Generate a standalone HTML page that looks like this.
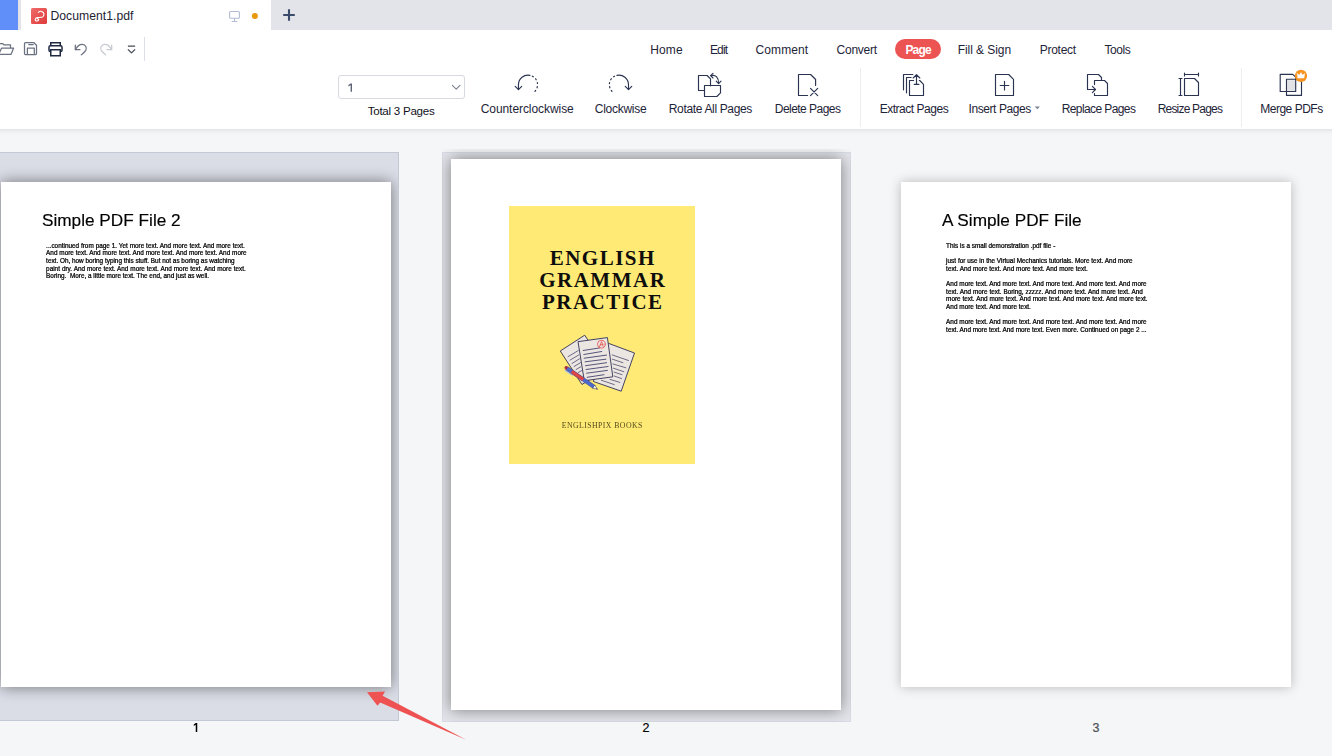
<!DOCTYPE html>
<html><head><meta charset="utf-8"><title>Document1.pdf</title>
<style>
html,body{margin:0;padding:0}
body{width:1332px;height:756px;overflow:hidden;position:relative;background:#f4f6f8;font-family:"Liberation Sans",sans-serif;color:#22283a}
.a{position:absolute}
.t{position:absolute;white-space:nowrap;line-height:1;transform-origin:0 0}
#tabbar{left:0;top:0;width:1332px;height:30px;background:#e2e4e9}
#blue{left:0;top:0;width:18px;height:30px;background:#618ffa}
#tab{left:21px;top:0;width:250px;height:30px;background:#fff}
#row2{left:0;top:30px;width:1332px;height:99px;background:#fff}
#rshadow{left:0;top:129px;width:1332px;height:6px;background:linear-gradient(#e4e5e7,#e8e9eb 20%,#edeef0 37%,#f0f1f3 54%,#f2f3f6 70%,#f3f5f7 85%,#f4f6f8)}
#pill{left:895px;top:39px;width:46px;height:20px;border-radius:10px;background:#ec5353}
#sel{left:338px;top:75px;width:125px;height:22px;border:1px solid #d6d9e0;border-radius:3px;background:#fff}
.vsep{width:1px;background:#eceef2}
svg{position:absolute;left:0;top:0;overflow:visible}
</style></head><body>
<div class="a" id="tabbar"></div><div class="a" id="blue"></div><div class="a" id="tab"></div>
<div class="a" id="row2"></div><div class="a" id="rshadow"></div>
<div class="a" id="pill"></div><div class="a" id="sel"></div>
<div class="a vsep" style="left:860px;top:68px;height:59px"></div>
<div class="a vsep" style="left:1241px;top:68px;height:59px"></div>
<div class="a" style="left:144px;top:37px;width:1px;height:24px;background:#dcdfe7"></div>
<svg width="1332" height="130" viewBox="0 0 1332 130" fill="none" stroke-linecap="round" stroke-linejoin="round">
<!-- app tab icon -->
<defs><linearGradient id="rg" x1="0" y1="0" x2="1" y2="1"><stop offset="0" stop-color="#ef6b6b"/><stop offset="1" stop-color="#df3a3a"/></linearGradient></defs>
<rect x="31" y="8" width="16" height="16" rx="1.6" fill="url(#rg)"/>
<path d="M38.4 12.4 C39.3 11.3 41.2 11.1 42.6 11.9 C44.2 12.9 44.4 15.2 43 16.6 C41.8 17.7 39.2 17.3 37.3 17.6 C35.6 17.9 34.8 19.3 35.5 20.3 C36.2 21.3 38 21.2 38.5 20.2 C38.9 19.3 38.2 18.6 37.4 18.8" stroke="#fff" stroke-width="1.15"/>
<!-- monitor -->
<g stroke="#b3bcd2" stroke-width="1.1"><rect x="229.6" y="11.5" width="9.8" height="6.8" rx="1"/><path d="M234.5 18.4v3M232.2 21.5h4.6"/></g>
<circle cx="254.9" cy="15.9" r="3" fill="#e9980c"/>
<path d="M283.2 15h11.6M289 9.2v11.6" stroke="#3c4a6b" stroke-width="2.1" stroke-linecap="butt"/>
<!-- quick access -->
<g stroke="#6a7181" stroke-width="1.25">
<path d="M-1 43.6h3.7l1.2 1.2h6.6v2.8"/><path d="M1.6 48.1h12l-2.5 6.2h-12.4z"/>
<path d="M25.5 42.5h8.2l2.8 2.8v8.2a1 1 0 0 1-1 1h-10a1 1 0 0 1-1-1v-10a1 1 0 0 1 1-1z"/><path d="M28.8 44.5h4.4M27.4 54.4v-6.3h6.9v6.3"/>
<path d="M75.3 45v4.7h4.6"/><path d="M75.5 49.5C77.2 46.4 79.8 44.3 82.4 44.4C85.6 44.6 87.2 47.8 85.8 50.4C84.7 52.2 83 53.4 81.3 54.8"/>
</g>
<g stroke="#1f2942" stroke-width="1.5" stroke-linejoin="miter"><path d="M50.75 45.6v-2.85h9.5v2.85"/><rect x="49" y="45.75" width="13" height="6" rx="1.4"/><rect x="50.75" y="49.75" width="9.5" height="6" fill="#fff"/></g>
<g stroke="#c7cad1" stroke-width="1.25"><path d="M111.7 45v4.7h-4.6"/><path d="M111.5 49.5C109.8 46.4 107.2 44.3 104.6 44.4C101.4 44.6 99.8 47.8 101.2 50.4C102.3 52.2 104 53.4 105.7 54.8"/></g>
<path d="M127.9 46.2h7.2M127.9 49.4l3.6 3.5l3.6-3.5" stroke="#454a54" stroke-width="1.3" stroke-linecap="butt"/>
<path d="M350.6 83.5H352V91.7H350.6V85.2L348.4 86.5V85.1Z" fill="#5d6474"/>
<!-- select chevron -->
<path d="M452.4 85.3l3.8 3.8l3.8-3.8" stroke="#7b8293" stroke-width="1.1"/>
<!-- ribbon icons -->
<g stroke="#2a3350" stroke-width="1.15">
<!-- ccw -->
<path d="M518.45 89.2V84.7A9.58 9.58 0 0 1 529.99 75.33"/><path d="M529.99 75.33A9.58 9.58 0 0 1 533.36 92.64" stroke-dasharray="2.05 2.05" stroke-dashoffset="2.05" stroke-linecap="butt"/><path d="M515.2 86.3l3.25 3.3l3.25-3.3"/>
<!-- cw -->
<path d="M628.5 89.2V84.7A9.6 9.6 0 0 0 616.91 75.33"/><path d="M616.91 75.33A9.6 9.6 0 0 0 613.54 92.64" stroke-dasharray="2.05 2.05" stroke-dashoffset="2.05" stroke-linecap="butt"/><path d="M625.25 86.3l3.25 3.3l3.25-3.3"/>
<!-- rotate all -->
<path d="M704.5 90.5h-6v-15h8.6l3.4 3.4v6.9"/><path d="M704.5 85.5h16v7.4l-3.6 3.6h-12.4z"/>
<path d="M711 75.7C715.6 74.2 718.9 77.8 718.6 83.2"/><path d="M713 73.3l-2.4 2.4l2.4 2.3M716.2 81.2l2.4 2.4l2.4-2.4"/>
<!-- delete -->
<path d="M807.6 95.5h-9.1v-21h12.1l5 5v6"/><path d="M810.5 88.4l7.2 7.3M817.7 88.4l-7.2 7.3"/>
<!-- extract -->
<path d="M903.5 89.8v-15.3h9.3"/><path d="M906.5 92.8v-15.3h4.6"/><path d="M913.6 80.5h-4.1v15h14v-11.2l-3.8-3.8h-.4"/><path d="M916.5 84.2v-9.4M913.2 78l3.3-3.3l3.3 3.3M914.2 84.4h4.7"/>
<!-- insert -->
<path d="M995.5 74.5h13.2l4.8 4.8v16.2h-18z"/><path d="M1000.2 85.5h8.6M1004.5 81.2v8.8"/>
<!-- replace -->
<path d="M1101.5 80v-2.5l-3-3h-11v15h8"/><path d="M1092.4 86.4l3.1 3.1l-3.1 3.1"/><path d="M1094.5 84.6v-4.1h10l3 3v12h-13v-2"/>
<!-- resize -->
<path d="M1184.5 74.5h14M1184.5 73.1v2.8M1198.5 73.1v2.8M1180.5 78.5v17M1179 78.5h3M1179 95.5h3"/><path d="M1184.5 78.5h10l4 4v13h-14z"/>
<!-- merge -->
<rect x="1287.4" y="80.2" width="7.6" height="10.6" fill="#e1e2e5" stroke="none"/>
<path d="M1280.2 74.3h12.6l2.9 2.9v14.3h-15.5z"/><path d="M1286.5 79.2h15v16.2h-15z"/>
</g>
<circle cx="1301" cy="75.9" r="6.1" fill="#f7931e"/>
<path d="M1297.4 73.6l1.9 1.6l1.7-2.6l1.7 2.6l1.9-1.6l-.6 4.4h-6z" fill="#fff" stroke="#fff" stroke-width=".5" stroke-linejoin="round"/>
<!-- insert dropdown triangle -->
<path d="M1034.7 106.5h5.2l-2.6 2.8z" fill="#7c8394"/>
</svg>
<div class="t" style="left:50.50px;top:10.07px;font-size:12.2px;color:#1d2233;letter-spacing:0.019px">Document1.pdf</div>
<div class="t" style="left:650.20px;top:43.84px;font-size:12px;color:#1e2438;letter-spacing:0.121px">Home</div>
<div class="t" style="left:709.90px;top:43.84px;font-size:12px;color:#1e2438;letter-spacing:-0.815px">Edit</div>
<div class="t" style="left:755.60px;top:43.84px;font-size:12px;color:#1e2438;letter-spacing:0.087px">Comment</div>
<div class="t" style="left:836.60px;top:43.84px;font-size:12px;color:#1e2438;letter-spacing:-0.264px">Convert</div>
<div class="t" style="left:905.40px;top:43.84px;font-size:12px;color:#fff;letter-spacing:-0.836px;font-weight:bold">Page</div>
<div class="t" style="left:957.70px;top:43.84px;font-size:12px;color:#1e2438;letter-spacing:-0.064px">Fill &amp; Sign</div>
<div class="t" style="left:1039.70px;top:43.84px;font-size:12px;color:#1e2438;letter-spacing:-0.264px">Protect</div>
<div class="t" style="left:1104.50px;top:43.84px;font-size:12px;color:#1e2438;letter-spacing:-0.428px">Tools</div>
<div class="t" style="left:367.70px;top:104.78px;font-size:11.6px;color:#10121c;letter-spacing:-0.263px">Total 3 Pages</div>
<div class="t" style="left:480.70px;top:102.64px;font-size:12px;color:#1e2438;letter-spacing:-0.064px">Counterclockwise</div>
<div class="t" style="left:594.80px;top:102.64px;font-size:12px;color:#1e2438;letter-spacing:-0.280px">Clockwise</div>
<div class="t" style="left:668.80px;top:102.64px;font-size:12px;color:#1e2438;letter-spacing:-0.346px">Rotate All Pages</div>
<div class="t" style="left:774.80px;top:102.64px;font-size:12px;color:#1e2438;letter-spacing:-0.541px">Delete Pages</div>
<div class="t" style="left:879.70px;top:102.64px;font-size:12px;color:#1e2438;letter-spacing:-0.475px">Extract Pages</div>
<div class="t" style="left:968.60px;top:102.64px;font-size:12px;color:#1e2438;letter-spacing:-0.434px">Insert Pages</div>
<div class="t" style="left:1061.70px;top:102.64px;font-size:12px;color:#1e2438;letter-spacing:-0.599px">Replace Pages</div>
<div class="t" style="left:1157.70px;top:102.64px;font-size:12px;color:#1e2438;letter-spacing:-0.804px">Resize Pages</div>
<div class="t" style="left:1260.20px;top:102.64px;font-size:12px;color:#1e2438;letter-spacing:-0.483px">Merge PDFs</div>
<style>
#selbox{left:-2px;top:152px;width:399px;height:567px;background:#dadde6;border:1px solid #c2c8d4;overflow:hidden}
#hovbox{left:442px;top:152px;width:407px;height:568px;background:#e3e5eb;border:1px solid #d8dce6;clip-path:inset(-3px 0 0 0);box-sizing:content-box}
.pg{position:absolute;background:#fff}
#pg1{left:2px;top:29px;width:390px;height:505px;box-shadow:0 0 14px rgba(8,6,0,.49)}
#pg2{left:8px;top:6px;width:390px;height:551px;box-shadow:0 0 15px rgba(8,6,0,.47)}
#pg3{left:901px;top:182px;width:390px;height:505px;box-shadow:0 0 11px rgba(8,6,0,.25)}
.pdf{position:absolute;left:0;top:0;width:612px;height:792px;transform:scale(.6373);transform-origin:0 0;color:#000}
.pdf .h{position:absolute;white-space:nowrap;line-height:1;font-size:27px;-webkit-text-stroke:.25px #000}
.pdf .l{position:absolute;white-space:nowrap;line-height:1;font-size:10px;left:70.8px;text-align:justify;text-align-last:justify;-webkit-text-stroke:.38px #000}
#cover{position:absolute;left:58px;top:47px;width:186px;height:258px;background:#feea74}
.ct{position:absolute;left:0;width:186px;text-align:center;white-space:nowrap;line-height:1;font-family:"Liberation Serif",serif;font-weight:bold;color:#0d0d0d;font-size:21px;letter-spacing:1.5px;text-indent:1.5px}
.pn{-webkit-text-stroke:.2px currentColor;position:absolute;width:40px;text-align:center;font-size:12.5px;line-height:1;top:721.5px;color:#000}
</style>
<div class="a" id="selbox"><div class="pg" id="pg1"><div class="pdf">
<div class="h" style="left:64.3px;top:46.8px">Simple PDF File 2</div>
<div class="l" style="top:95.1px;width:311.6px">...continued from page 1. Yet more text. And more text. And more text.</div>
<div class="l" style="top:107.1px;width:314.6px">And more text. And more text. And more text. And more text. And more</div>
<div class="l" style="top:119.1px;width:295.6px">text. Oh, how boring typing this stuff. But not as boring as watching</div>
<div class="l" style="top:131.1px;width:313.2px">paint dry. And more text. And more text. And more text. And more text.</div>
<div class="l" style="top:143.1px;width:255.6px">Boring.&nbsp; More, a little more text. The end, and just as well.</div>
</div></div></div>
<div class="a" id="hovbox"><div class="pg" id="pg2">
<div id="cover">
<div class="ct" style="top:41.6px">ENGLISH</div>
<div class="ct" style="top:63.8px">GRAMMAR</div>
<div class="ct" style="top:85.9px">PRACTICE</div>
<div class="ct" style="top:214.8px;width:372px;transform:scale(.5);transform-origin:0 0;font-size:15.6px;font-weight:normal;letter-spacing:.84px;text-indent:1px;color:rgba(60,52,16,.88)">ENGLISHPIX BOOKS</div>
<svg width="186" height="258" viewBox="509 206 186 258" style="position:absolute;left:0;top:0;filter:blur(.35px)" stroke-linecap="round" stroke-linejoin="round">
<g fill="#ece6e2" stroke="#3a3a5c" stroke-width=".95">
<path d="M560.6 350.8L584.7 335.2L607 368.6L582.3 384.3Z"/>
<path d="M607.3 342.9L634.5 353L621.2 391.2L593.7 381.6Z"/>
</g>
<g stroke="#5d5d7c" stroke-width=".9" fill="none">
<path d="M568.1 356.6L578.2 350.6M570 360.1L578.9 354.9M572 363.5L579.5 358.8M574.1 366.5L580.4 362.7M576.1 369.5L580.8 366.8M578.2 372.5L581.6 370.6"/>
<path d="M612.2 354.9L628.5 360.5M612.4 359.2L622.9 362.7M612.8 363.9L625.9 367.8M613.4 368.2L623.8 371.7M614.1 372.1L622 374.7M614.3 376L621.6 378.6M610 379.4L619.9 382.4M601.4 380.3L614.3 384.6"/>
</g>
<path d="M578.4 341.6L607.4 337.6L612.8 376.8L584.7 380.7Z" fill="#ece6e2" stroke="#3a3a5c" stroke-width=".95"/>
<path d="M583.2 350.5L599.7 347.9M583.8 354.5L601.8 351.5M584.2 358.2L606.6 355.1M585.1 361.8L605.9 359.2M585.5 365.7L606.6 362.7M586.1 369.5L608.1 366.5M586.6 373.2L607.4 370.4M587.2 377.3L604 374.7" stroke="#55557a" stroke-width="1" fill="none"/>
<circle cx="601.4" cy="344.2" r="3.9" fill="none" stroke="#e25a5a" stroke-width=".9"/>
<path d="M599.6 346.6L601.6 341.6L603.2 346.4M600.2 345L603 344.4" fill="none" stroke="#e25a5a" stroke-width=".9"/>
<g transform="translate(565.1 367) rotate(34.5)">
<rect x="1.5" y="1.8" width="9.5" height="1.5" rx=".7" fill="#a7b6e2"/>
<rect x="-.4" y="-1.8" width="4.5" height="3.6" rx="1.8" fill="#a8304a"/>
<rect x="2.6" y="-1.8" width="32.4" height="3.6" fill="#4a6ad2"/>
<rect x="8" y="-1.8" width="14" height="3.6" fill="#e04646"/>
<path d="M35 -1.8L39.3 0L35 1.8Z" fill="#f2f2f2" stroke="#3a3a5c" stroke-width=".5"/>
<path d="M38 -.6L39.6 0L38 .6Z" fill="#3a3a5c"/>
<path d="M2.6 -1.8H35M2.6 1.8H35" stroke="#3a3a6c" stroke-width=".4" fill="none"/>
</g>
</svg>

</div>
</div></div>
<div class="pg" id="pg3"><div class="pdf">
<div class="h" style="left:64.4px;top:46.8px">A Simple PDF File</div>
<div class="l" style="top:95.1px;width:171.3px">This is a small demonstration .pdf file -</div>
<div class="l" style="top:119.1px;width:292.6px">just for use in the Virtual Mechanics tutorials. More text. And more</div>
<div class="l" style="top:131.1px;width:222.2px">text. And more text. And more text. And more text.</div>
<div class="l" style="top:155.1px;width:314.6px">And more text. And more text. And more text. And more text. And more</div>
<div class="l" style="top:167.1px;width:308.5px">text. And more text. Boring, zzzzz. And more text. And more text. And</div>
<div class="l" style="top:179.1px;width:316.2px">more text. And more text. And more text. And more text. And more text.</div>
<div class="l" style="top:191.1px;width:133px">And more text. And more text.</div>
<div class="l" style="top:215.1px;width:314.6px">And more text. And more text. And more text. And more text. And more</div>
<div class="l" style="top:227.1px;width:314.6px">text. And more text. And more text. Even more. Continued on page 2 ...</div>
</div></div>
<div class="pn" style="left:626px">2</div><div class="pn" style="left:1076px;color:#4e5056">3</div>
<svg width="1332" height="756" viewBox="0 0 1332 756"><path d="M367 692.2L385 691.6L382.6 695.8L466.1 739.7L380.2 702.4L377.5 705.8Z" fill="#ee5252"/><path d="M195.75 722.9H197.25V732.1H195.75V724.7L193.8 725.9V724.4Z" fill="#000"/></svg>
</body></html>
